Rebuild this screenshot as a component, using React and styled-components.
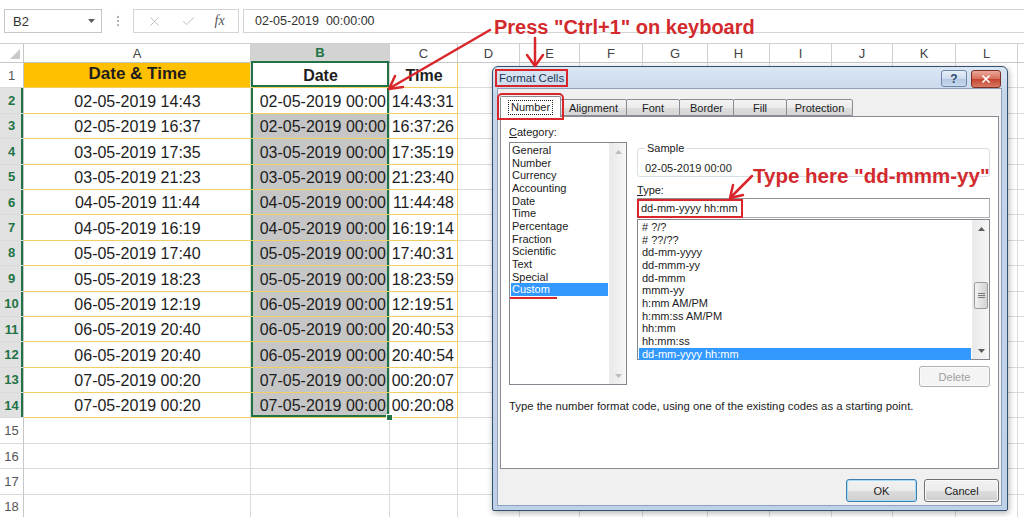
import React from 'react';
import styled, { createGlobalStyle } from 'styled-components';
import { X, Check, EllipsisVertical } from 'lucide-react';

const GREEN = '#217346';
const GRID = '#dadada';
const GOLD = '#f3cf62';
const RED = '#d8262b';

const columns = [
  { name: 'A', width: 227 },
  { name: 'B', width: 139 },
  { name: 'C', width: 68 },
  { name: 'D', width: 62 },
  { name: 'E', width: 60 },
  { name: 'F', width: 63 },
  { name: 'G', width: 65 },
  { name: 'H', width: 62 },
  { name: 'I', width: 62 },
  { name: 'J', width: 61 },
  { name: 'K', width: 63 },
  { name: 'L', width: 62 },
  { name: '', width: 40 },
];

const data = [
  ['02-05-2019 14:43', '02-05-2019 00:00', '14:43:31'],
  ['02-05-2019 16:37', '02-05-2019 00:00', '16:37:26'],
  ['03-05-2019 17:35', '03-05-2019 00:00', '17:35:19'],
  ['03-05-2019 21:23', '03-05-2019 00:00', '21:23:40'],
  ['04-05-2019 11:44', '04-05-2019 00:00', '11:44:48'],
  ['04-05-2019 16:19', '04-05-2019 00:00', '16:19:14'],
  ['05-05-2019 17:40', '05-05-2019 00:00', '17:40:31'],
  ['05-05-2019 18:23', '05-05-2019 00:00', '18:23:59'],
  ['06-05-2019 12:19', '06-05-2019 00:00', '12:19:51'],
  ['06-05-2019 20:40', '06-05-2019 00:00', '20:40:53'],
  ['06-05-2019 20:40', '06-05-2019 00:00', '20:40:54'],
  ['07-05-2019 00:20', '07-05-2019 00:00', '00:20:07'],
  ['07-05-2019 00:20', '07-05-2019 00:00', '00:20:08'],
];

const categories = [
  'General', 'Number', 'Currency', 'Accounting', 'Date', 'Time',
  'Percentage', 'Fraction', 'Scientific', 'Text', 'Special', 'Custom',
];

const formats = [
  '# ?/?', '# ??/??', 'dd-mm-yyyy', 'dd-mmm-yy', 'dd-mmm', 'mmm-yy',
  'h:mm AM/PM', 'h:mm:ss AM/PM', 'hh:mm', 'hh:mm:ss', 'dd-mm-yyyy hh:mm',
];

const tabs = [
  { label: 'Number', width: 61 },
  { label: 'Alignment', width: 67 },
  { label: 'Font', width: 54 },
  { label: 'Border', width: 55 },
  { label: 'Fill', width: 54 },
  { label: 'Protection', width: 67 },
];

const GlobalStyle = createGlobalStyle`
  html, body {
    margin: 0;
    padding: 0;
    background: #fff;
    overflow: hidden;
  }
  * {
    box-sizing: border-box;
  }
`;

const Page = styled.div`
  position: relative;
  width: 1024px;
  height: 517px;
  overflow: hidden;
  font-family: 'Liberation Sans', Arial, sans-serif;
  color: #222;
`;

/* ---------- formula bar ---------- */

const FormulaBar = styled.div`
  display: flex;
  align-items: flex-start;
  height: 43px;
  padding: 9px 0 0 4px;
`;

const NameBox = styled.div`
  width: 98px;
  height: 24px;
  border: 1px solid #c6c6c6;
  display: flex;
  align-items: center;
  justify-content: space-between;
  padding: 0 6px 0 8px;
  font-size: 13px;
  color: #333;
`;

const Dots = styled.div`
  width: 31px;
  height: 24px;
  display: flex;
  align-items: center;
  justify-content: center;
`;

const IconGroup = styled.div`
  width: 106px;
  height: 24px;
  border: 1px solid #d4d4d4;
  display: flex;
  align-items: center;
  justify-content: space-around;
  padding: 0 4px;
`;

const Fx = styled.span`
  font-family: 'Liberation Serif', serif;
  font-style: italic;
  font-size: 14px;
  color: #555;
`;

const FormulaInput = styled.div`
  flex: 1;
  height: 24px;
  margin-left: 4px;
  border: 1px solid #d4d4d4;
  border-right: none;
  display: flex;
  align-items: center;
  padding-left: 11px;
  font-size: 12.5px;
  color: #333;
  white-space: pre;
`;

/* ---------- sheet ---------- */

const Sheet = styled.div`
  display: grid;
  grid-template-columns: 24px ${columns.map((c) => `${c.width}px`).join(' ')};
  grid-template-rows: 20px repeat(18, 25.4px);
`;

const Corner = styled.div`
  position: relative;
  border-top: 1px solid #d0d0d0;
  border-right: 1px solid #c6c6c6;
  border-bottom: 1px solid #c6c6c6;
  display: flex;
  align-items: flex-end;
  justify-content: flex-end;
  padding: 0 3px 3px 0;
`;

const ColHead = styled.div`
  display: flex;
  align-items: center;
  justify-content: center;
  font-size: 13px;
  font-weight: ${(p) => (p.$active ? 700 : 400)};
  color: ${(p) => (p.$active ? GREEN : '#444')};
  background: ${(p) => (p.$active ? '#d3d3d3' : '#fff')};
  border-top: 1px solid #d0d0d0;
  border-right: 1px solid #d0d0d0;
  border-bottom: ${(p) => (p.$active ? `2px solid ${GREEN}` : '1px solid #c6c6c6')};
`;

const RowHead = styled.div`
  display: flex;
  align-items: center;
  justify-content: center;
  font-size: 13px;
  font-weight: ${(p) => (p.$active ? 700 : 400)};
  color: ${(p) => (p.$active ? GREEN : '#555')};
  background: ${(p) => (p.$active ? '#e1e1e1' : '#fff')};
  border-bottom: 1px solid ${GRID};
  border-right: 1px solid #c6c6c6;
  box-shadow: ${(p) => (p.$active ? `inset -2px 0 ${GREEN}` : 'none')};
`;

const justify = { center: 'center', right: 'flex-end', left: 'flex-start' };

const Cell = styled.div`
  position: relative;
  display: flex;
  align-items: ${(p) => (p.$middle ? 'center' : 'flex-end')};
  justify-content: ${(p) => justify[p.$align || 'left']};
  padding: 0 3px 2px 4px;
  font-size: ${(p) => p.$size || 16}px;
  line-height: 18px;
  font-weight: ${(p) => (p.$bold ? 700 : 400)};
  color: #1d1d1d;
  white-space: nowrap;
  background: ${(p) => p.$fill || '#fff'};
  border-right: 1px solid ${(p) => (p.$goldRight ? GOLD : GRID)};
  border-bottom: 1px solid ${(p) => (p.$gold ? GOLD : GRID)};
  box-shadow: ${(p) => p.$sel || 'none'};
`;

const FillHandle = styled.span`
  position: absolute;
  right: -4px;
  bottom: -4px;
  width: 7px;
  height: 7px;
  background: ${GREEN};
  border: 1px solid #fff;
  z-index: 2;
`;

/* ---------- dialog ---------- */

const Dialog = styled.div`
  position: absolute;
  left: 492px;
  top: 66px;
  width: 516px;
  border: 1px solid #34506f;
  border-radius: 6px 6px 2px 2px;
  background: linear-gradient(#dae6f4, #c4d5ea 30px, #bfd1e8);
  padding: 0 5px 4px 4px;
  box-shadow: 1px 2px 6px rgba(0, 0, 0, 0.3);
  font-size: 11px;
  color: #1b1b1b;
  z-index: 5;
`;

const TitleBar = styled.div`
  height: 21px;
  display: flex;
  align-items: center;
  justify-content: space-between;
`;

const TitleText = styled.span`
  font-size: 11.5px;
  color: #1e3656;
  padding: 2px 3px;
  outline: 2.5px solid ${RED};
  outline-offset: -1px;
  margin-left: -1px;
`;

const TitleButtons = styled.div`
  display: flex;
  gap: 4px;
  margin-top: 3px;
  margin-right: 1px;
`;

const HelpButton = styled.div`
  width: 26px;
  height: 17px;
  border: 1px solid #6b86a9;
  border-radius: 3px;
  background: linear-gradient(#e9f0f8, #cddcee 50%, #b4c8e1 51%, #c6d8ec);
  display: flex;
  align-items: center;
  justify-content: center;
  font-size: 12px;
  font-weight: 700;
  color: #2d4a70;
`;

const CloseButton = styled.div`
  width: 30px;
  height: 18px;
  border: 1px solid #7c2e25;
  border-radius: 3px;
  background: linear-gradient(#eba99b, #d66d59 50%, #c4432f 51%, #d87a64);
  display: flex;
  align-items: center;
  justify-content: center;
`;

const DialogBody = styled.div`
  background: #f0f0f0;
  border: 1px solid #8ea2bb;
  padding: 8px 2px 3px 2px;
`;

const TabStrip = styled.div`
  display: flex;
  align-items: flex-end;
  height: 19px;
`;

const Tab = styled.div`
  position: relative;
  width: ${(p) => p.$w}px;
  height: ${(p) => (p.$active ? 21 : 17)}px;
  margin-bottom: ${(p) => (p.$active ? -1 : 0)}px;
  margin-left: ${(p) => (p.$first ? 0 : -1)}px;
  display: flex;
  align-items: center;
  justify-content: center;
  border: 1px solid #898c95;
  border-bottom: ${(p) => (p.$active ? 'none' : '1px solid #898c95')};
  border-radius: 2px 2px 0 0;
  background: ${(p) =>
    p.$active ? '#fff' : 'linear-gradient(#f3f3f3, #ebebeb 50%, #dddddd 51%, #d6d6d6)'};
  outline: ${(p) => (p.$active ? `2.5px solid ${RED}` : 'none')};
  outline-offset: 1px;
  z-index: ${(p) => (p.$active ? 1 : 0)};
`;

const FocusBox = styled.span`
  border: 1px dotted #222;
  padding: 0 2px;
  line-height: 13px;
`;

const TabPanel = styled.div`
  height: 353px;
  background: #fff;
  border: 1px solid #898c95;
  padding: 9px 8px 0;
`;

const Columns = styled.div`
  display: flex;
  gap: 10px;
`;

const LeftCol = styled.div`
  width: 118px;
  display: flex;
  flex-direction: column;
`;

const RightCol = styled.div`
  flex: 1;
  display: flex;
  flex-direction: column;
`;

const FieldLabel = styled.div`
  height: ${(p) => p.$h || 16}px;
  margin-top: ${(p) => p.$mt || 0}px;
  line-height: 13px;
`;

const ListBox = styled.div`
  height: ${(p) => p.$h}px;
  border: 1px solid #828790;
  display: flex;
  background: #fff;
`;

const ListItems = styled.div`
  flex: 1;
  padding: 1px 1px 0;
`;

const ListItem = styled.div`
  position: relative;
  height: 12.67px;
  line-height: 12.67px;
  padding-left: ${(p) => p.$indent || 1}px;
  white-space: nowrap;
  background: ${(p) => (p.$selected ? '#3399ff' : 'transparent')};
  color: ${(p) => (p.$selected ? '#fff' : '#1b1b1b')};

  &::after {
    content: '';
    display: ${(p) => (p.$marked ? 'block' : 'none')};
    position: absolute;
    left: -1px;
    bottom: -3px;
    width: 47px;
    height: 2px;
    background: ${RED};
  }
`;

const ScrollTrack = styled.div`
  width: 17px;
  display: flex;
  flex-direction: column;
  background: linear-gradient(90deg, #e9e9e9, #f6f6f6);
  border-left: 1px solid #ececec;
`;

const ScrollArrow = styled.div`
  height: 17px;
  display: flex;
  align-items: center;
  justify-content: center;
`;

const ScrollSpacer = styled.div`
  height: ${(p) => (p.$h ? `${p.$h}px` : 'auto')};
  flex: ${(p) => (p.$h ? 'none' : 1)};
`;

const ScrollThumb = styled.div`
  height: 27px;
  margin: 0 1px;
  border: 1px solid #9c9c9c;
  border-radius: 2px;
  background: linear-gradient(90deg, #f2f2f2, #e2e2e2 50%, #d3d3d3);
  display: flex;
  align-items: center;
  justify-content: center;
`;

const SampleField = styled.fieldset`
  margin: 16px 0 0;
  padding: 7px 6px 1px;
  border: 1px solid #d5dfe5;
  border-radius: 3px;
  min-width: 0;

  legend {
    padding: 0 2px;
    margin-left: 1px;
    line-height: 13px;
  }
`;

const SampleValue = styled.div`
  line-height: 13px;
  padding-left: 1px;
`;

const TypeInput = styled.div`
  height: 20px;
  border: 1px solid #abadb3;
  border-top-color: #8e9198;
  display: flex;
  align-items: center;
  margin-bottom: 1px;
`;

const Marked = styled.span`
  padding: 2px 4px 2px 3px;
  outline: 2.5px solid ${RED};
  outline-offset: -1px;
  line-height: 13px;
`;

const Button = styled.div`
  width: ${(p) => p.$w}px;
  height: ${(p) => p.$h || 23}px;
  display: flex;
  align-items: center;
  justify-content: center;
  border: 1px solid ${(p) => (p.$focused ? '#3c7fb1' : p.$disabled ? '#adb2b5' : '#707070')};
  border-radius: 3px;
  background: ${(p) =>
    p.$disabled ? '#f4f4f4' : 'linear-gradient(#f2f2f2, #ebebeb 50%, #dddddd 51%, #cfcfcf)'};
  box-shadow: ${(p) => (p.$focused ? 'inset 0 0 0 1px #a6dbf8' : 'inset 0 0 0 1px #fbfbfb')};
  color: ${(p) => (p.$disabled ? '#a0a0a0' : '#1b1b1b')};
  font-size: 11px;
`;

const DeleteRow = styled.div`
  display: flex;
  justify-content: flex-end;
  margin-top: 6px;
`;

const Hint = styled.div`
  margin-top: 13px;
  line-height: 13px;
  font-size: 11.3px;
`;

const ButtonRow = styled.div`
  display: flex;
  justify-content: flex-end;
  gap: 7px;
  margin-top: 10px;
`;

/* ---------- annotations ---------- */

const Overlay = styled.svg`
  position: absolute;
  left: 0;
  top: 0;
  z-index: 10;
  pointer-events: none;
`;

const Note = styled.div`
  position: absolute;
  left: ${(p) => p.$x}px;
  top: ${(p) => p.$y}px;
  font-size: ${(p) => p.$size || 20}px;
  line-height: 20px;
  font-weight: 700;
  color: #d32a2e;
  white-space: nowrap;
  z-index: 11;
`;

const Arrow = () => (
  <svg width="7" height="4" viewBox="0 0 7 4">
    <polygon points="0,0 7,0 3.5,4" fill="#5c5c5c" />
  </svg>
);

const Grip = () => (
  <svg width="7" height="7" viewBox="0 0 7 7">
    <path d="M0 1.5h7M0 3.5h7M0 5.5h7" stroke="#7a7a7a" strokeWidth="1" />
  </svg>
);

const ScrollBar = ({ thumbAt, dim }) => (
  <ScrollTrack>
    <ScrollArrow>
      <svg width="7" height="4" viewBox="0 0 7 4">
        <polygon points="0,4 3.5,0 7,4" fill={dim ? '#bdbdbd' : '#5c5c5c'} />
      </svg>
    </ScrollArrow>
    {thumbAt != null && <ScrollSpacer $h={thumbAt} />}
    {thumbAt != null && (
      <ScrollThumb>
        <Grip />
      </ScrollThumb>
    )}
    <ScrollSpacer />
    <ScrollArrow>
      <svg width="7" height="4" viewBox="0 0 7 4">
        <polygon points="0,0 7,0 3.5,4" fill={dim ? '#bdbdbd' : '#5c5c5c'} />
      </svg>
    </ScrollArrow>
  </ScrollTrack>
);

const sel = (bottom) => {
  const parts = [`inset 2px 0 ${GREEN}`, `inset -2px 0 ${GREEN}`];
  if (bottom) parts.push(`inset 0 -2px ${GREEN}`);
  return parts.join(', ');
};

const renderRow = (r) => {
  const active = r >= 2 && r <= 14;
  const cells = [
    <RowHead key={`h${r}`} $active={active}>
      {r}
    </RowHead>,
  ];

  columns.forEach((col, ci) => {
    const key = `${ci}-${r}`;
    if (r === 1 && col.name === 'A') {
      cells.push(
        <Cell key={key} $align="center" $middle $fill="#ffc000" $bold $size={17} $gold>
          Date &amp; Time
        </Cell>
      );
    } else if (r === 1 && col.name === 'B') {
      cells.push(
        <Cell key={key} $align="center" $bold $gold $sel={sel(true)}>
          Date
        </Cell>
      );
    } else if (r === 1 && col.name === 'C') {
      cells.push(
        <Cell key={key} $align="center" $bold $gold $goldRight>
          Time
        </Cell>
      );
    } else if (active && col.name === 'A') {
      cells.push(
        <Cell key={key} $align="center" $gold>
          {data[r - 2][0]}
        </Cell>
      );
    } else if (active && col.name === 'B') {
      cells.push(
        <Cell
          key={key}
          $align="right"
          $gold
          $fill={r > 2 ? '#c6c6c6' : '#fff'}
          $sel={sel(r === 14)}
        >
          {data[r - 2][1]}
          {r === 14 && <FillHandle />}
        </Cell>
      );
    } else if (active && col.name === 'C') {
      cells.push(
        <Cell key={key} $align="right" $gold $goldRight>
          {data[r - 2][2]}
        </Cell>
      );
    } else {
      cells.push(<Cell key={key} />);
    }
  });
  return cells;
};

const FormatCellsDialog = () => (
  <Dialog>
    <TitleBar>
      <TitleText>Format Cells</TitleText>
      <TitleButtons>
        <HelpButton>?</HelpButton>
        <CloseButton>
          <X size={12} strokeWidth={3.4} color="#fff" />
        </CloseButton>
      </TitleButtons>
    </TitleBar>
    <DialogBody>
      <TabStrip>
        {tabs.map((t, i) => (
          <Tab key={t.label} $w={t.width} $active={i === 0} $first={i === 0}>
            {i === 0 ? <FocusBox>{t.label}</FocusBox> : t.label}
          </Tab>
        ))}
      </TabStrip>
      <TabPanel>
        <Columns>
          <LeftCol>
            <FieldLabel>
              <u>C</u>ategory:
            </FieldLabel>
            <ListBox $h={243}>
              <ListItems>
                {categories.map((c) => (
                  <ListItem key={c} $selected={c === 'Custom'} $marked={c === 'Custom'}>
                    {c}
                  </ListItem>
                ))}
              </ListItems>
              <ScrollBar dim />
            </ListBox>
          </LeftCol>
          <RightCol>
            <SampleField>
              <legend>Sample</legend>
              <SampleValue>02-05-2019 00:00</SampleValue>
            </SampleField>
            <FieldLabel $mt={7} $h={14}>
              <u>T</u>ype:
            </FieldLabel>
            <TypeInput>
              <Marked>dd-mm-yyyy hh:mm</Marked>
            </TypeInput>
            <ListBox $h={141}>
              <ListItems>
                {formats.map((f, i) => (
                  <ListItem key={f} $indent={3} $selected={i === formats.length - 1}>
                    {f}
                  </ListItem>
                ))}
              </ListItems>
              <ScrollBar thumbAt={45} />
            </ListBox>
            <DeleteRow>
              <Button $w={71} $h={21} $disabled>
                Delete
              </Button>
            </DeleteRow>
          </RightCol>
        </Columns>
        <Hint>Type the number format code, using one of the existing codes as a starting point.</Hint>
      </TabPanel>
      <ButtonRow>
        <Button $w={71} $focused>
          OK
        </Button>
        <Button $w={75}>Cancel</Button>
      </ButtonRow>
    </DialogBody>
  </Dialog>
);

const Annotations = () => (
  <>
    <Overlay width="1024" height="517" viewBox="0 0 1024 517">
      <g stroke={RED} strokeWidth="2.5" fill="none" strokeLinecap="round" strokeLinejoin="round">
        <line x1="490" y1="30" x2="390" y2="88" />
        <polyline points="403,87 389,89 395,76" />
        <line x1="535" y1="38" x2="535" y2="65" />
        <polyline points="527,55 535,66 543,55" />
        <line x1="752" y1="176" x2="731" y2="197" />
        <polyline points="743,195 730,198 733,185" />
      </g>
    </Overlay>
    <Note $x={494} $y={17}>
      Press "Ctrl+1" on keyboard
    </Note>
    <Note $x={753} $y={166} $size={20.5}>
      Type here "dd-mmm-yy"
    </Note>
  </>
);

const App = () => {
  const rowNums = Array.from({ length: 18 }, (_, i) => i + 1);
  return (
    <Page>
      <GlobalStyle />
      <FormulaBar>
        <NameBox>
          <span>B2</span>
          <Arrow />
        </NameBox>
        <Dots>
          <EllipsisVertical size={14} color="#b0b0b0" />
        </Dots>
        <IconGroup>
          <X size={15} strokeWidth={1.4} color="#b4b4b4" />
          <Check size={15} strokeWidth={1.4} color="#b4b4b4" />
          <Fx>fx</Fx>
        </IconGroup>
        <FormulaInput>02-05-2019  00:00:00</FormulaInput>
      </FormulaBar>
      <Sheet>
        <Corner>
          <svg width="10" height="10" viewBox="0 0 10 10">
            <polygon points="10,0 10,10 0,10" fill="#c9c9c9" />
          </svg>
        </Corner>
        {columns.map((c, i) => (
          <ColHead key={i} $active={c.name === 'B'}>
            {c.name}
          </ColHead>
        ))}
        {rowNums.map((r) => renderRow(r))}
      </Sheet>
      <FormatCellsDialog />
      <Annotations />
    </Page>
  );
};

export default App;
